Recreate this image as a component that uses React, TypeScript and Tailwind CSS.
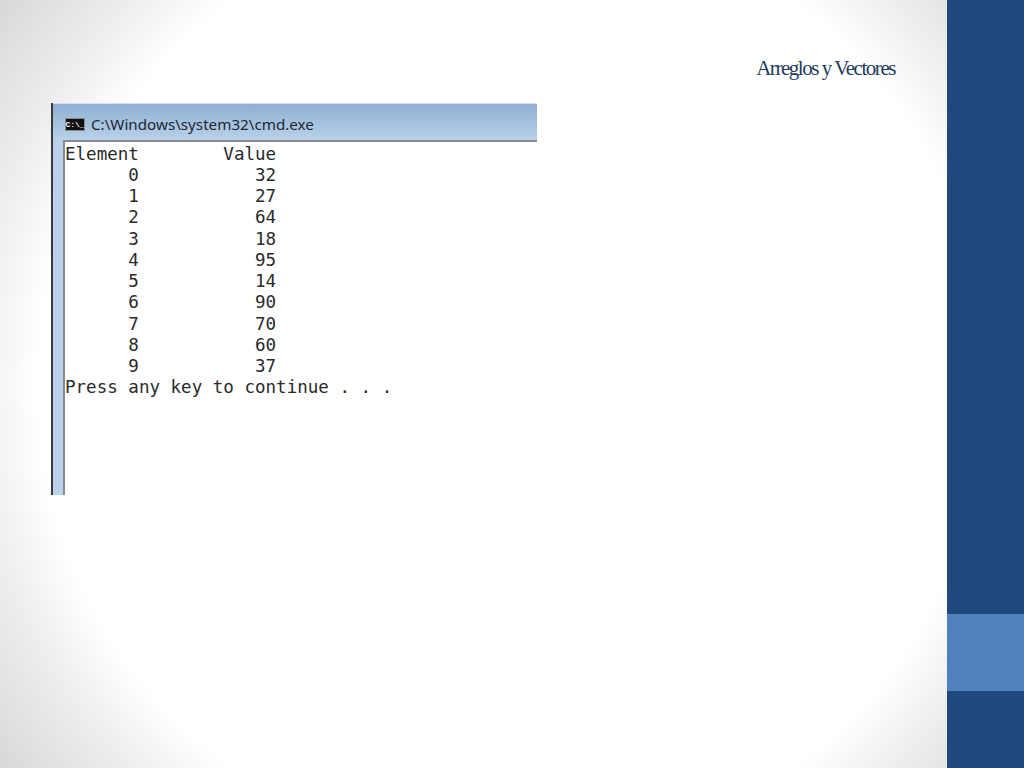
import React from "react";

const lines = [
  "Element        Value",
  "      0           32",
  "      1           27",
  "      2           64",
  "      3           18",
  "      4           95",
  "      5           14",
  "      6           90",
  "      7           70",
  "      8           60",
  "      9           37",
  "Press any key to continue . . .",
];

export default function App() {
  return (
    <div className="flex h-[768px] w-[1024px] overflow-hidden bg-white">
      <main className="flex w-[947px] flex-col bg-[radial-gradient(circle_at_512px_384px,#ffffff_475px,#f0f0f0_530px,#d8d8d8_640px)]">
        <div className="flex h-[103px] items-start justify-end pr-[52px] pt-[55px]">
          <h1 className="text-[21px] leading-[26px] tracking-[-1.45px] text-[#1f3b60] [font-family:'Liberation_Serif',serif]">
            Arreglos y Vectores
          </h1>
        </div>
        <div className="ml-[51px] flex h-[392px] w-[486px] flex-col border-l-2 border-[#3a3a3a]">
          <div className="flex h-[37px] shrink-0 items-center gap-[6px] border-t border-[#d5e0ee] bg-gradient-to-b from-[#8fb0d2] to-[#b9d1ea] pl-[12px] pt-[5px]">
            <div className="flex h-[13px] w-[20px] items-center justify-center border border-[#8a8a8a] bg-[#111111]">
              <span className="text-[8px] font-bold leading-none text-white [font-family:'Liberation_Mono',monospace]">C:\_</span>
            </div>
            <span className="text-[15.2px] leading-none text-[#1c2630] [font-family:'Noto_Sans',sans-serif]">
              C:\Windows\system32\cmd.exe
            </span>
          </div>
          <div className="flex min-h-0 flex-1">
            <div className="w-[10px] shrink-0 bg-[#b9d1ea]" />
            <div className="min-w-0 flex-1 overflow-hidden border-l-2 border-t-2 border-[#8a8a8a] bg-white pt-[1.5px]">
              {lines.map((l) => (
                <div
                  key={l}
                  className="h-[21.25px] whitespace-pre text-[17.55px] leading-[21.25px] text-[#2a2a2a] [font-family:'DejaVu_Sans_Mono',monospace]"
                >
                  {l}
                </div>
              ))}
            </div>
          </div>
        </div>
      </main>
      <aside className="flex w-[77px] shrink-0 flex-col bg-[#1f497d]">
        <div className="h-[614px]" />
        <div className="h-[77px] bg-[#4f81bd]" />
      </aside>
    </div>
  );
}
